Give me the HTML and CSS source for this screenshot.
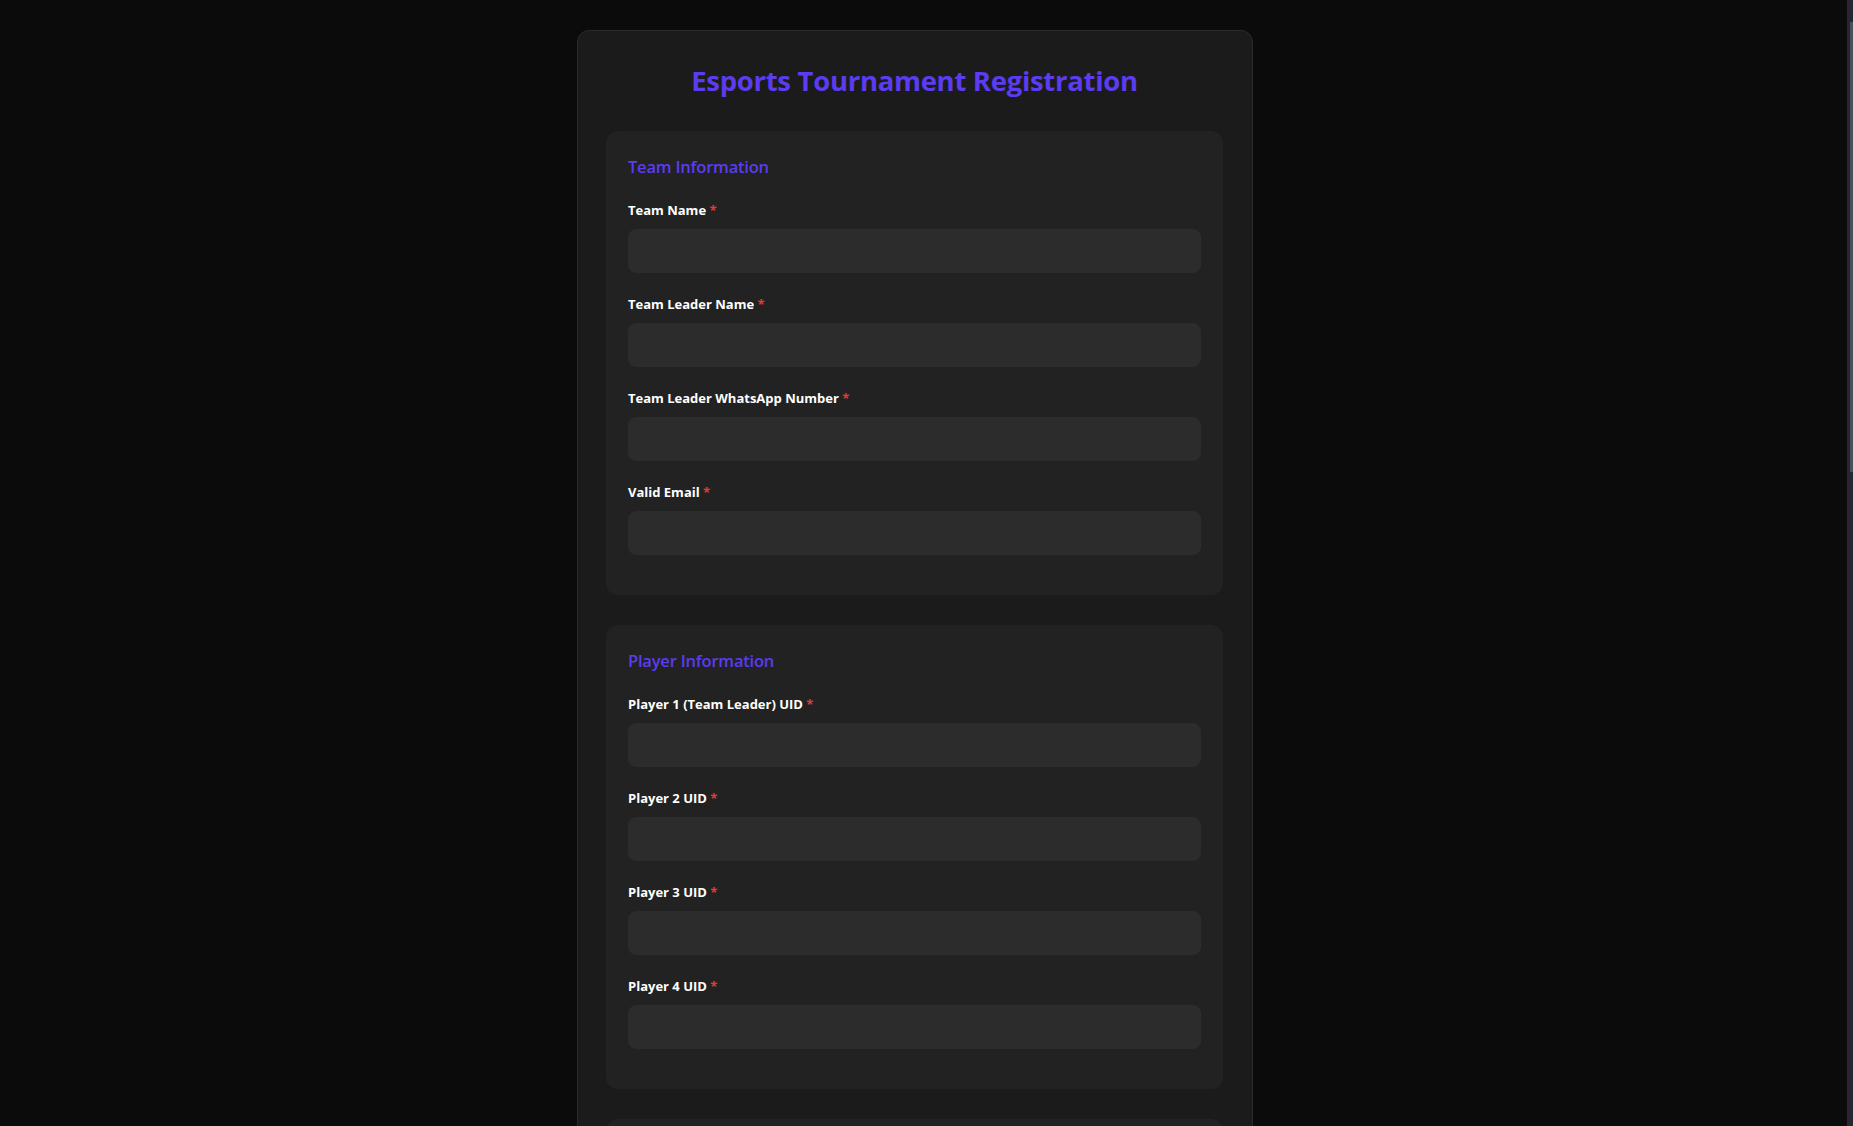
FILE: index.html
```html
<!DOCTYPE html>
<html lang="en">
<head>
<meta charset="UTF-8">
<title>Esports Tournament Registration</title>
<link rel="stylesheet" href="styles.css">
</head>
<body>
<main class="page">
  <form class="card">
    <h1 class="title">Esports Tournament Registration</h1>

    <section class="section">
      <h2 class="section-title">Team Information</h2>
      <div class="field">
        <label class="label">Team Name <span class="req">*</span></label>
        <input class="input" type="text">
      </div>
      <div class="field">
        <label class="label">Team Leader Name <span class="req">*</span></label>
        <input class="input" type="text">
      </div>
      <div class="field">
        <label class="label">Team Leader WhatsApp Number <span class="req">*</span></label>
        <input class="input" type="tel">
      </div>
      <div class="field">
        <label class="label">Valid Email <span class="req">*</span></label>
        <input class="input" type="email">
      </div>
    </section>

    <section class="section">
      <h2 class="section-title">Player Information</h2>
      <div class="field">
        <label class="label">Player 1 (Team Leader) UID <span class="req">*</span></label>
        <input class="input" type="text">
      </div>
      <div class="field">
        <label class="label">Player 2 UID <span class="req">*</span></label>
        <input class="input" type="text">
      </div>
      <div class="field">
        <label class="label">Player 3 UID <span class="req">*</span></label>
        <input class="input" type="text">
      </div>
      <div class="field">
        <label class="label">Player 4 UID <span class="req">*</span></label>
        <input class="input" type="text">
      </div>
    </section>

    <section class="section">
      <h2 class="section-title">Substitute Information</h2>
      <div class="field">
        <label class="label">Substitute 1 UID</label>
        <input class="input" type="text">
      </div>
      <div class="field">
        <label class="label">Substitute 2 UID</label>
        <input class="input" type="text">
      </div>
    </section>

    <section class="section">
      <h2 class="section-title">Payment Information</h2>
      <div class="field">
        <label class="label">Transaction ID <span class="req">*</span></label>
        <input class="input" type="text">
      </div>
      <div class="field">
        <label class="label">Payment Screenshot <span class="req">*</span></label>
        <input class="input" type="text">
      </div>
    </section>

    <button class="submit" type="button">Register Team</button>
  </form>
</main>
<div class="scrollbar"><div class="scrollbar-thumb"></div></div>
</body>
</html>
```

FILE: styles.css
```css
html {
  background: #0b0b0b;
}

body {
  margin: 0;
  background: #0b0b0b;
  font-family: "Open Sans", "Noto Sans", "Liberation Sans", sans-serif;
  color: #ffffff;
}

.page {
  display: flex;
  justify-content: center;
  padding: 30px 23px 40px 0;
}

.card {
  width: 676px;
  box-sizing: border-box;
  background: #1b1b1b;
  border: 1px solid #2b2b2b;
  border-radius: 12px;
  padding: 30px 29px 30px 28px;
  display: flex;
  flex-direction: column;
  gap: 30px;
}

.title {
  margin: 0;
  text-align: center;
  color: #5b3cf0;
  font-size: 27.5px;
  font-weight: 700;
  line-height: 40px;
  letter-spacing: -0.3px;
}

.section {
  background: #222222;
  border-radius: 12px;
  padding: 24px 22px 20px;
}

.section-title {
  margin: 0 0 20px;
  color: #5b3cf0;
  font-size: 16.5px;
  font-weight: 600;
  line-height: 24px;
  letter-spacing: -0.2px;
}

.field {
  margin-bottom: 20px;
}

.label {
  display: block;
  font-size: 13px;
  font-weight: 700;
  line-height: 22px;
  margin-bottom: 8px;
  color: #ffffff;
}

.req {
  color: #e53935;
}

.input {
  display: block;
  width: 100%;
  height: 44px;
  box-sizing: border-box;
  background: #2c2c2c;
  border: 1px solid #2c2c2c;
  border-radius: 8px;
  padding: 10px 14px;
  color: #fff;
  font-size: 15px;
  font-family: inherit;
}

.submit {
  height: 50px;
  border: none;
  border-radius: 8px;
  background: #5b3cf0;
  color: #fff;
  font-family: inherit;
  font-size: 17px;
  font-weight: 700;
}

.scrollbar {
  position: fixed;
  top: 0;
  right: 0;
  width: 6px;
  height: 100%;
  background: #262733;
}

.scrollbar-thumb {
  position: absolute;
  top: 22px;
  right: 0;
  width: 3px;
  height: 450px;
  background: #4c4e5e;
}
```
